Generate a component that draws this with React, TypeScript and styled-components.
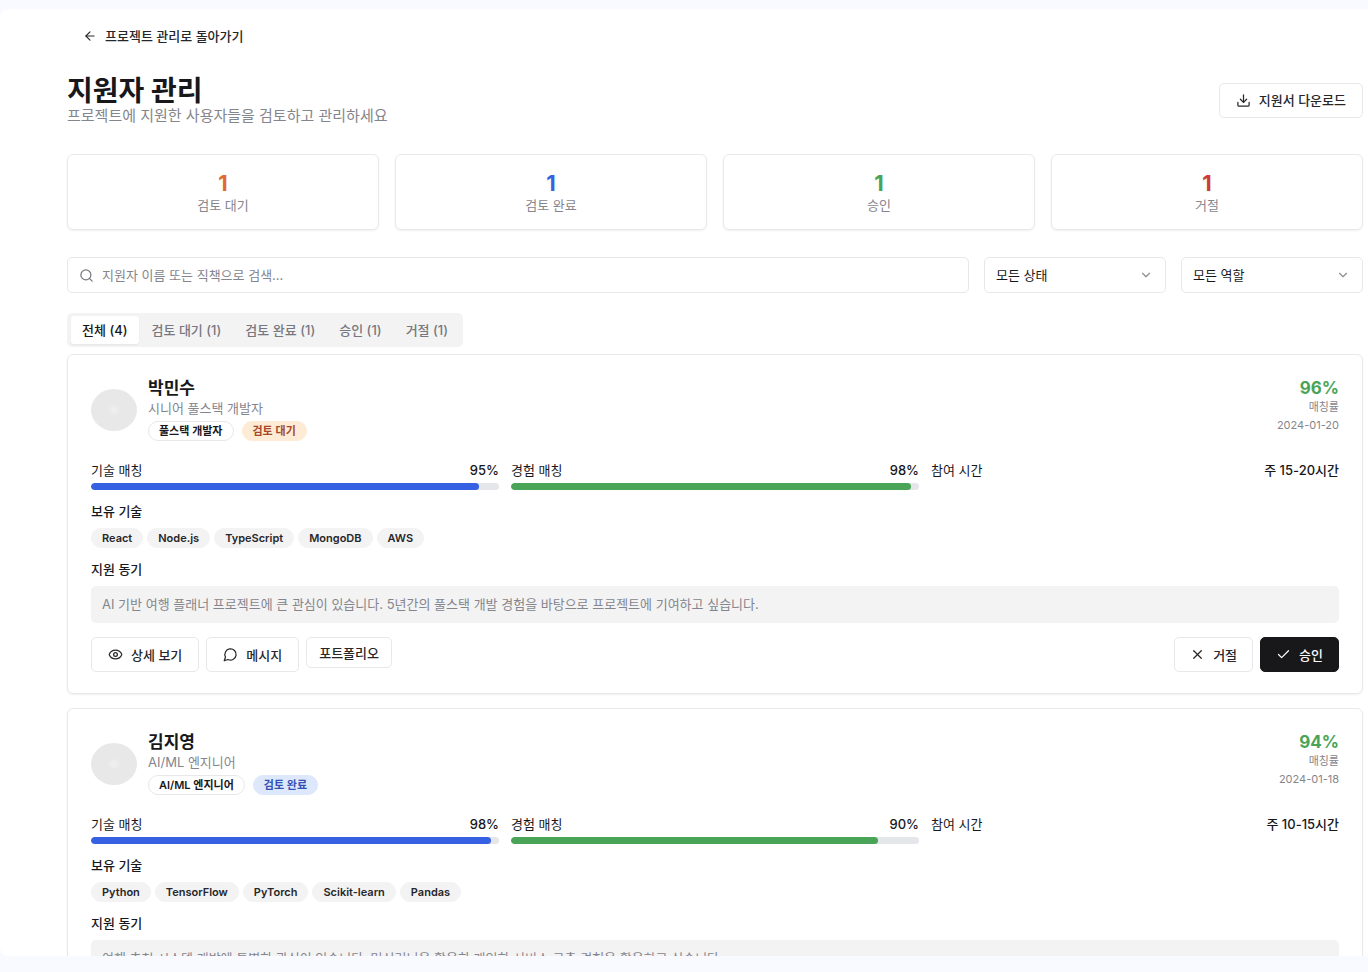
import React, { useState } from "react";
import styled, { createGlobalStyle } from "styled-components";
import { ArrowLeft, Check, ChevronDown, Download, Eye, Search, X } from "lucide-react";

const GlobalStyle = createGlobalStyle`
  *, *::before, *::after { box-sizing: border-box; }
  body {
    margin: 0;
    background: #f9faff;
    color: #18181b;
    font-family: Inter, "Noto Sans CJK KR", sans-serif;
    font-size: 13px;
    line-height: 18px;
  }
  button, input, select { font: inherit; color: inherit; }
  h1, h2, h3, p { margin: 0; }
`;

const Shell = styled.div`
  display: flex;
  height: 100vh;
  padding: 9px 0 16px;
`;

const Panel = styled.main`
  flex: 1;
  min-width: 0;
  overflow-y: auto;
  scrollbar-width: none;
  padding: 10px 5px 0 67px;
  background: #fff;
  border-radius: 8px 0 0 8px;
`;

const BackLink = styled.a`
  display: inline-flex;
  align-items: center;
  gap: 8px;
  height: 34px;
  padding: 0 16px;
  color: #27272a;
  font-weight: 500;
  text-decoration: none;
`;

const PageHeader = styled.header`
  display: flex;
  align-items: center;
  justify-content: space-between;
  margin-top: 22px;
`;

const Title = styled.h1`
  font-size: 28px;
  font-weight: 700;
  line-height: 32px;
`;

const Subtitle = styled.p`
  color: #85858d;
  font-size: 15px;
  line-height: 18px;
`;

const buttonSizes = {
  regular: { height: 35, padding: 16 },
  decision: { height: 35, padding: 15 },
  compact: { height: 31, padding: 12 },
};

const Button = styled.button<{ $primary?: boolean; $size?: keyof typeof buttonSizes }>`
  display: inline-flex;
  align-items: center;
  justify-content: center;
  gap: 8px;
  height: ${(p) => buttonSizes[p.$size ?? "regular"].height}px;
  padding: 0 ${(p) => buttonSizes[p.$size ?? "regular"].padding}px;
  border: 1px solid ${(p) => (p.$primary ? "#18181b" : "#e8e8ea")};
  border-radius: 5px;
  background: ${(p) => (p.$primary ? "#18181b" : "#fff")};
  color: ${(p) => (p.$primary ? "#fafafa" : "#27272a")};
  font-weight: 500;
  white-space: nowrap;
  cursor: pointer;
`;

const Stats = styled.section`
  display: grid;
  grid-template-columns: repeat(4, 1fr);
  gap: 16px;
  margin-top: 29px;
`;

const Surface = styled.div`
  border: 1px solid #e8e9ec;
  border-radius: 6px;
  background: #fff;
  box-shadow: 0 1px 2px rgba(0, 0, 0, 0.06);
`;

const Stat = styled(Surface)`
  padding: 15px 0;
  text-align: center;
`;

const StatValue = styled.div<{ $color: string }>`
  color: ${(p) => p.$color};
  font-size: 22px;
  font-weight: 700;
  line-height: 26px;
`;

const StatLabel = styled.div`
  color: #85858d;
`;

const Filters = styled.div`
  display: flex;
  gap: 15px;
  margin-top: 27px;
`;

const SearchBox = styled.label`
  display: flex;
  flex: 1;
  align-items: center;
  gap: 8px;
  height: 36px;
  padding: 0 11px;
  border: 1px solid #e8e8ea;
  border-radius: 5px;
  color: #77777f;
`;

const SearchInput = styled.input`
  flex: 1;
  min-width: 0;
  padding: 0;
  border: 0;
  outline: 0;
  background: transparent;
  &::placeholder { color: #85858d; opacity: 1; }
`;

const SelectBox = styled.div`
  position: relative;
  width: 182px;
  svg {
    position: absolute;
    top: 11px;
    right: 13px;
    color: #8d8d94;
    pointer-events: none;
  }
`;

const Select = styled.select`
  width: 100%;
  height: 36px;
  padding: 0 11px;
  border: 1px solid #e8e8ea;
  border-radius: 5px;
  background: #fff;
  appearance: none;
`;

const Tabs = styled.div`
  display: inline-flex;
  gap: 2px;
  margin-top: 20px;
  padding: 3px 4px;
  border-radius: 5px;
  background: #f3f3f4;
  vertical-align: top;
`;

const Tab = styled.button<{ $active: boolean }>`
  height: 28px;
  padding: 0 11px;
  border: 0;
  border-radius: 3px;
  background: ${(p) => (p.$active ? "#fff" : "transparent")};
  box-shadow: ${(p) => (p.$active ? "0 1px 2px rgba(0, 0, 0, 0.06)" : "none")};
  color: ${(p) => (p.$active ? "#18181b" : "#77777f")};
  font-weight: 500;
  cursor: pointer;
`;

const List = styled.div`
  display: flex;
  flex-direction: column;
  gap: 14px;
  margin-top: 7px;
`;

const Card = styled(Surface)`
  padding: 23px 23px 21px;
`;

const CardHeader = styled.div`
  display: flex;
  align-items: center;
  gap: 11px;
`;

const Avatar = styled.div`
  width: 46px;
  height: 42px;
  border-radius: 50%;
  background: radial-gradient(circle, #eeeeef 0 2px, #e8e8e9 6px);
`;

const Identity = styled.div`
  flex: 1;
`;

const Name = styled.h2`
  font-size: 17px;
  font-weight: 600;
  line-height: 20px;
`;

const Role = styled.p`
  margin-bottom: 3px;
  color: #85858d;
  line-height: 20px;
`;

const BadgeRow = styled.div<{ $gap: number }>`
  display: flex;
  flex-wrap: wrap;
  gap: ${(p) => p.$gap}px;
`;

const tones = {
  outline: { bg: "#fff", border: "#e8e8ea", text: "#18181b" },
  muted: { bg: "#f3f3f4", border: "#f3f3f4", text: "#27272a" },
  orange: { bg: "#fdebd5", border: "#fdebd5", text: "#a5482a" },
  blue: { bg: "#dde8fc", border: "#dde8fc", text: "#3450b4" },
  green: { bg: "#dcfce7", border: "#dcfce7", text: "#166534" },
  red: { bg: "#fee2e2", border: "#fee2e2", text: "#991b1b" },
};
type Tone = keyof typeof tones;

const Badge = styled.span<{ $tone: Tone }>`
  height: 20px;
  padding: 0 10px;
  border: 1px solid ${(p) => tones[p.$tone].border};
  border-radius: 10px;
  background: ${(p) => tones[p.$tone].bg};
  color: ${(p) => tones[p.$tone].text};
  font-size: 11px;
  font-weight: 600;
  line-height: 18px;
`;

const Score = styled.div`
  align-self: flex-start;
  color: #85858d;
  font-size: 11px;
  text-align: right;
`;

const ScoreValue = styled.div`
  color: #4aa457;
  font-size: 17px;
  font-weight: 700;
  line-height: 20px;
`;

const Metrics = styled.div`
  display: grid;
  grid-template-columns: repeat(3, 1fr);
  gap: 12px;
  margin-top: 20px;
`;

const MetricHead = styled.div`
  display: flex;
  justify-content: space-between;
`;

const MetricValue = styled.span`
  font-weight: 500;
`;

const Track = styled.div`
  height: 7px;
  margin-top: 4px;
  overflow: hidden;
  border-radius: 4px;
  background: #e5e6ea;
`;

const Fill = styled.div<{ $color: string }>`
  height: 100%;
  border-radius: 4px;
  background: ${(p) => p.$color};
`;

const SectionTitle = styled.h3`
  margin: 12px 0 8px;
  font-size: 13px;
  font-weight: 500;
  line-height: 18px;
`;

const Motivation = styled.p`
  padding: 9px 11px 10px;
  border-radius: 5px;
  background: #f3f3f4;
  color: #85858d;
`;

const Actions = styled.div`
  display: flex;
  align-items: flex-start;
  gap: 7px;
  margin-top: 14px;
`;

const Spacer = styled.div`
  flex: 1;
`;

type Status = "pending" | "reviewed" | "approved" | "rejected";

const statuses: Record<Status, { label: string; color: string; tone: Tone }> = {
  pending: { label: "검토 대기", color: "#e06a32", tone: "orange" },
  reviewed: { label: "검토 완료", color: "#3761e3", tone: "blue" },
  approved: { label: "승인", color: "#4aa457", tone: "green" },
  rejected: { label: "거절", color: "#cf3b36", tone: "red" },
};
const statusKeys = Object.keys(statuses) as Status[];

interface Applicant {
  name: string;
  title: string;
  role: string;
  status: Status;
  score: number;
  date: string;
  skill: number;
  experience: number;
  hours: string;
  skills: string[];
  motivation: string;
}

const applicants: Applicant[] = [
  {
    name: "박민수",
    title: "시니어 풀스택 개발자",
    role: "풀스택 개발자",
    status: "pending",
    score: 96,
    date: "2024-01-20",
    skill: 95,
    experience: 98,
    hours: "주 15-20시간",
    skills: ["React", "Node.js", "TypeScript", "MongoDB", "AWS"],
    motivation:
      "AI 기반 여행 플래너 프로젝트에 큰 관심이 있습니다. 5년간의 풀스택 개발 경험을 바탕으로 프로젝트에 기여하고 싶습니다.",
  },
  {
    name: "김지영",
    title: "AI/ML 엔지니어",
    role: "AI/ML 엔지니어",
    status: "reviewed",
    score: 94,
    date: "2024-01-18",
    skill: 98,
    experience: 90,
    hours: "주 10-15시간",
    skills: ["Python", "TensorFlow", "PyTorch", "Scikit-learn", "Pandas"],
    motivation:
      "여행 추천 시스템 개발에 특별한 관심이 있습니다. 머신러닝을 활용한 개인화 서비스 구축 경험을 활용하고 싶습니다.",
  },
];

function MessageIcon() {
  return (
    <svg
      width="15"
      height="15"
      viewBox="0 0 24 24"
      fill="none"
      stroke="currentColor"
      strokeWidth="2"
      strokeLinecap="round"
      strokeLinejoin="round"
      aria-hidden="true"
    >
      <path d="M7.9 20A9 9 0 1 0 4 16.1L2 22Z" />
    </svg>
  );
}

function Metric({ label, value, color }: { label: string; value: number; color: string }) {
  return (
    <div>
      <MetricHead>
        <span>{label}</span>
        <MetricValue>{value}%</MetricValue>
      </MetricHead>
      <Track>
        <Fill $color={color} style={{ width: `${value}%` }} />
      </Track>
    </div>
  );
}

function ApplicantCard({ a }: { a: Applicant }) {
  return (
    <Card as="article">
      <CardHeader>
        <Avatar />
        <Identity>
          <Name>{a.name}</Name>
          <Role>{a.title}</Role>
          <BadgeRow $gap={8}>
            <Badge $tone="outline">{a.role}</Badge>
            <Badge $tone={statuses[a.status].tone}>{statuses[a.status].label}</Badge>
          </BadgeRow>
        </Identity>
        <Score>
          <ScoreValue>{a.score}%</ScoreValue>
          <div>매칭률</div>
          <div>{a.date}</div>
        </Score>
      </CardHeader>
      <Metrics>
        <Metric label="기술 매칭" value={a.skill} color="#3761e3" />
        <Metric label="경험 매칭" value={a.experience} color="#4aa457" />
        <MetricHead>
          <span>참여 시간</span>
          <MetricValue>{a.hours}</MetricValue>
        </MetricHead>
      </Metrics>
      <SectionTitle>보유 기술</SectionTitle>
      <BadgeRow $gap={4}>
        {a.skills.map((s) => (
          <Badge key={s} $tone="muted">{s}</Badge>
        ))}
      </BadgeRow>
      <SectionTitle>지원 동기</SectionTitle>
      <Motivation>{a.motivation}</Motivation>
      <Actions>
        <Button type="button"><Eye size={15} />상세 보기</Button>
        <Button type="button"><MessageIcon />메시지</Button>
        <Button type="button" $size="compact">포트폴리오</Button>
        <Spacer />
        <Button type="button" $size="decision"><X size={15} />거절</Button>
        <Button type="button" $size="decision" $primary><Check size={15} />승인</Button>
      </Actions>
    </Card>
  );
}

export default function App() {
  const [tab, setTab] = useState<Status | "all">("all");
  const shown = applicants.filter((a) => tab === "all" || a.status === tab);

  return (
    <>
      <GlobalStyle />
      <Shell>
        <Panel>
          <BackLink href="#projects"><ArrowLeft size={14} />프로젝트 관리로 돌아가기</BackLink>
          <PageHeader>
            <div>
              <Title>지원자 관리</Title>
              <Subtitle>프로젝트에 지원한 사용자들을 검토하고 관리하세요</Subtitle>
            </div>
            <Button type="button"><Download size={15} />지원서 다운로드</Button>
          </PageHeader>
          <Stats>
            {statusKeys.map((k) => (
              <Stat key={k}>
                <StatValue $color={statuses[k].color}>1</StatValue>
                <StatLabel>{statuses[k].label}</StatLabel>
              </Stat>
            ))}
          </Stats>
          <Filters>
            <SearchBox>
              <Search size={15} />
              <SearchInput type="text" aria-label="지원자 검색" placeholder="지원자 이름 또는 직책으로 검색..." />
            </SearchBox>
            <SelectBox>
              <Select aria-label="상태"><option>모든 상태</option></Select>
              <ChevronDown size={14} />
            </SelectBox>
            <SelectBox>
              <Select aria-label="역할"><option>모든 역할</option></Select>
              <ChevronDown size={14} />
            </SelectBox>
          </Filters>
          <Tabs role="tablist">
            <Tab type="button" role="tab" aria-selected={tab === "all"} $active={tab === "all"} onClick={() => setTab("all")}>
              전체 (4)
            </Tab>
            {statusKeys.map((k) => (
              <Tab key={k} type="button" role="tab" aria-selected={tab === k} $active={tab === k} onClick={() => setTab(k)}>
                {statuses[k].label} (1)
              </Tab>
            ))}
          </Tabs>
          <List>
            {shown.map((a) => (
              <ApplicantCard key={a.name} a={a} />
            ))}
          </List>
        </Panel>
      </Shell>
    </>
  );
}
